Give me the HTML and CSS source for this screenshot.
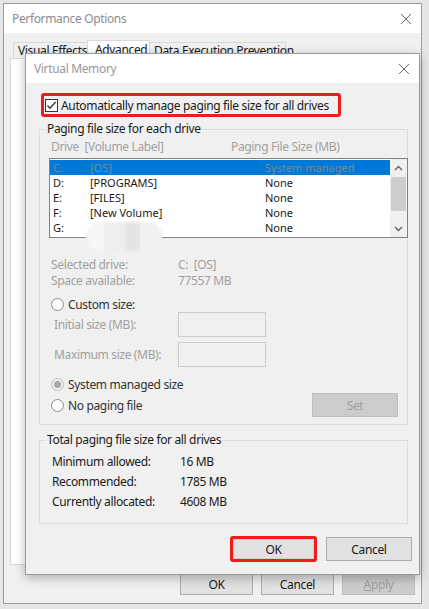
FILE: index.html
```html
<!DOCTYPE html>
<html>
<head>
<meta charset="utf-8">
<link rel="stylesheet" href="styles.css">
</head>
<body>
<div class="perf">
  <div class="titlebar perf-title">
    <span class="title-text">Performance Options</span>
    <svg class="close" width="12" height="12" viewBox="0 0 12 12"><path d="M1 1L11 11M11 1L1 11" stroke="#6a6a6a" stroke-width="1"/></svg>
  </div>
  <div class="perf-body">
    <div class="tabs">
      <div class="tab tab-ve">Visual Effects</div>
      <div class="tab tab-adv">Advanced</div>
      <div class="tab tab-dep">Data Execution Prevention</div>
    </div>
    <div class="tabpage"></div>
    <div class="perf-buttons">
      <div class="btn">OK</div>
      <div class="btn">Cancel</div>
      <div class="btn btn-disabled"><u>A</u>pply</div>
    </div>
  </div>
</div>

<div class="vm">
  <div class="titlebar vm-title">
    <span class="title-text">Virtual Memory</span>
    <svg class="close" width="12" height="12" viewBox="0 0 12 12"><path d="M1 1L11 11M11 1L1 11" stroke="#6a6a6a" stroke-width="1"/></svg>
  </div>
  <div class="vm-body">
    <div class="auto-row">
      <span class="checkbox"><svg width="11" height="11" viewBox="0 0 11 11"><path d="M1.5 5.5L4 8.2L9.6 2" fill="none" stroke="#333" stroke-width="1.3"/></svg></span>
      <span class="auto-text">Automatically manage paging file size for all drives</span>
    </div>

    <fieldset class="group group1">
      <legend>Paging file size for each drive</legend>
      <div class="list-head dis">
        <span class="col-drive">Drive&nbsp; [Volume Label]</span>
        <span>Paging File Size (MB)</span>
      </div>
      <div class="listbox">
        <div class="rows">
          <div class="row sel"><span class="c1">C:</span><span class="c2">[OS]</span><span>System managed</span></div>
          <div class="row"><span class="c1">D:</span><span class="c2">[PROGRAMS]</span><span>None</span></div>
          <div class="row"><span class="c1">E:</span><span class="c2">[FILES]</span><span>None</span></div>
          <div class="row"><span class="c1">F:</span><span class="c2">[New Volume]</span><span>None</span></div>
          <div class="row"><span class="c1">G:</span><span class="c2"></span><span>None</span></div>
        </div>
        <div class="scrollbar">
          <div class="sb-arrow"><svg width="9" height="6" viewBox="0 0 9 6"><path d="M1 5L4.5 1.5L8 5" fill="none" stroke="#606060" stroke-width="1.4"/></svg></div>
          <div class="sb-thumb"></div>
          <div class="sb-space"></div>
          <div class="sb-arrow"><svg width="9" height="6" viewBox="0 0 9 6"><path d="M1 1L4.5 4.5L8 1" fill="none" stroke="#606060" stroke-width="1.4"/></svg></div>
        </div>
      </div>
      <div class="blur"></div>
      <div class="info dis">
        <div class="info-row"><span class="info-label">Selected drive:</span><span>C:&nbsp; [OS]</span></div>
        <div class="info-row"><span class="info-label">Space available:</span><span>77557 MB</span></div>
      </div>
      <div class="radio-row custom"><span class="radio"></span><span>Custom size:</span></div>
      <div class="field-row"><span class="field-label dis">Initial size (MB):</span><span class="input"></span></div>
      <div class="field-row second"><span class="field-label dis">Maximum size (MB):</span><span class="input"></span></div>
      <div class="radio-row sysman"><span class="radio on"></span><span>System managed size</span></div>
      <div class="last-row">
        <div class="radio-row"><span class="radio"></span><span>No paging file</span></div>
        <div class="btn set btn-disabled">Set</div>
      </div>
    </fieldset>

    <fieldset class="group group2">
      <legend>Total paging file size for all drives</legend>
      <div class="tot-row"><span class="tot-label">Minimum allowed:</span><span>16 MB</span></div>
      <div class="tot-row"><span class="tot-label">Recommended:</span><span>1785 MB</span></div>
      <div class="tot-row"><span class="tot-label">Currently allocated:</span><span>4608 MB</span></div>
    </fieldset>

    <div class="vm-buttons">
      <div class="ok-ring"><div class="btn ok">OK</div></div>
      <div class="btn cancel">Cancel</div>
    </div>
  </div>
</div>
</body>
</html>
```

FILE: styles.css
```css
* { box-sizing: border-box; }
body {
  margin: 0;
  background: #e6e6e6;
  font-family: "Noto Sans", "Open Sans", sans-serif;
  font-size: 12px;
  letter-spacing: -0.35px;
  color: #1a1a1a;
  width: 429px;
  height: 609px;
  overflow: hidden;
  position: relative;
}
.perf {
  margin: 3px 0 0 3px;
  width: 419px;
  height: 601px;
  border: 1px solid #9c9c9c;
  background: #f0f0f0;
  display: flex;
  flex-direction: column;
}
.titlebar {
  background: #fff;
  display: flex;
  align-items: center;
  justify-content: space-between;
  padding: 0 9px 0 8px;
}
.perf-title { height: 29px; }
.title-text { color: #8c8c8c; font-size: 12px; }
.close { display: block; }
.perf-body { padding: 7px 6px 0 6px; display: flex; flex-direction: column; }
.tabs { display: flex; align-items: flex-end; height: 18px; padding-left: 3px; }
.tab {
  height: 16px;
  border: 1px solid #d9d9d9;
  border-bottom: none;
  background: #f0f0f0;
  line-height: 15px;
  padding-left: 4px;
  white-space: nowrap;
}
.tab-ve { width: 74px; border-right: none; }
.tab-adv { width: 63px; height: 19px; background: #fff; margin-bottom: -1px; position: relative; line-height: 17px; padding-left: 7px; }
.tab-dep { width: 136px; border-left: none; }
.tabpage {
  height: 507px;
  width: 404px;
  background: #fff;
  border: 1px solid #d9d9d9;
}
.perf-buttons { display: flex; justify-content: flex-end; gap: 8px; padding-top: 9px; }
.btn {
  width: 73px;
  height: 21px;
  background: #e1e1e1;
  border: 1px solid #adadad;
  display: flex;
  align-items: center;
  justify-content: center;
  color: #1a1a1a;
}
.btn-disabled { background: #cccccc; border-color: #bfbfbf; color: #a0a0a0; }

/* Virtual memory dialog (window over the parent window) */
.vm {
  position: absolute;
  left: 25px;
  top: 53px;
  width: 395px;
  height: 522px;
  border: 1px solid #9a9a9a;
  background: #f0f0f0;
  box-shadow: 0 3px 10px rgba(0,0,0,0.28);
}
.vm-title { height: 29px; }
.vm-title .title-text { color: #999; }
.vm-body { padding: 10px 0 0 15px; }
.auto-row {
  width: 300px;
  height: 24px;
  border: 3px solid #f21b1b;
  border-radius: 3px;
  display: flex;
  align-items: center;
  padding-left: 1px;
  gap: 3px;
  color: #1a1a1a;
}
.checkbox {
  width: 13px;
  height: 13px;
  border: 1px solid #333;
  background: #fff;
  display: flex;
  align-items: center;
  justify-content: center;
}
.checkbox svg { display: block; }
.auto-text { white-space: nowrap; }
.dis { color: #a0a0a0; }

.group {
  margin: 4px 0 0 -2px;
  width: 369px;
  border: 1px solid #dcdcdc;
  padding: 0;
  min-width: 0;
  position: relative;
}
.group legend {
  margin-left: 6px;
  padding: 0 1px;
  line-height: 16px;
  height: 16px;
  color: #1a1a1a;
}
.group1 { padding-bottom: 7px; }
.list-head { display: flex; margin-top: 2px; height: 15px; line-height: 15px; padding-left: 11px; }
.col-drive { width: 180px; }
.listbox {
  margin: 4px 0 0 9px;
  width: 359px;
  height: 80px;
  border: 1px solid #828282;
  background: #fff;
  display: flex;
}
.rows { flex: 1; padding-top: 1px; }
.row { display: flex; height: 15px; line-height: 15px; padding-left: 3px; color: #1a1a1a; overflow: hidden; font-size: 11px; letter-spacing: 0; }
.row.sel { background: #0078d7; color: #7d8a98; }
.c1 { width: 37px; }
.c2 { width: 175px; }
.scrollbar { width: 17px; background: #f0f0f0; display: flex; flex-direction: column; }
.sb-arrow { height: 17px; display: flex; align-items: center; justify-content: center; }
.sb-arrow svg { display: block; }
.sb-thumb { height: 34px; background: #cdcdcd; margin: 1px 1px 0 1px; }
.sb-space { flex: 1; }
.blur {
  position: absolute;
  left: 46px;
  top: 85px;
  width: 76px;
  height: 29px;
  border-radius: 14px;
  background:
    linear-gradient(90deg, #f6f6f6 0 18px, #eeeeee 18px 40px, #e4e4e4 40px 54px, #f1f1f1 54px 100%);
  filter: blur(1.2px);
}
.info { margin-top: 19px; padding-left: 11px; }
.info-row { display: flex; height: 16px; line-height: 16px; }
.info-label { width: 127px; }
.radio-row { display: flex; align-items: center; gap: 4px; padding-left: 11px; color: #333; height: 16px; }
.custom { margin-top: 8px; height: 15px; }
.radio {
  width: 13px;
  height: 13px;
  border: 1px solid #8a8a8a;
  border-radius: 50%;
  background: #fff;
  display: flex;
  align-items: center;
  justify-content: center;
}
.radio.on { border-color: #bcbcbc; background: #f0f0f0; }
.radio.on::after { content: ""; width: 7px; height: 7px; border-radius: 50%; background: #a8a8a8; }
.field-row { display: flex; align-items: center; height: 25px; padding-left: 14px; }
.field-row.second { margin-top: 5px; }
.field-label { width: 124px; }
.input { width: 88px; height: 25px; border: 1px solid #cccccc; background: #f0f0f0; }
.sysman { margin-top: 9px; }
.last-row { display: flex; align-items: center; justify-content: space-between; height: 24px; margin-top: 1px; padding-right: 9px; }
.last-row .radio-row { padding-left: 11px; }
.btn.set { width: 86px; height: 24px; }

.group2 { margin-top: 7px; padding-bottom: 11px; }
.tot-row { display: flex; height: 20px; line-height: 20px; padding-left: 12px; color: #1a1a1a; }
.group2 .tot-row:first-of-type { margin-top: 4px; }
.tot-label { width: 128px; }

.vm-buttons { display: flex; justify-content: flex-end; gap: 9px; margin-top: 12px; padding-right: 7px; align-items: center; }
.ok-ring { border: 3px solid #f21b1b; border-radius: 3px; width: 87px; height: 26px; }
.btn.ok { width: 81px; height: 20px; border-color: #cfcfcf; }
.btn.cancel { width: 86px; height: 24px; }
```
